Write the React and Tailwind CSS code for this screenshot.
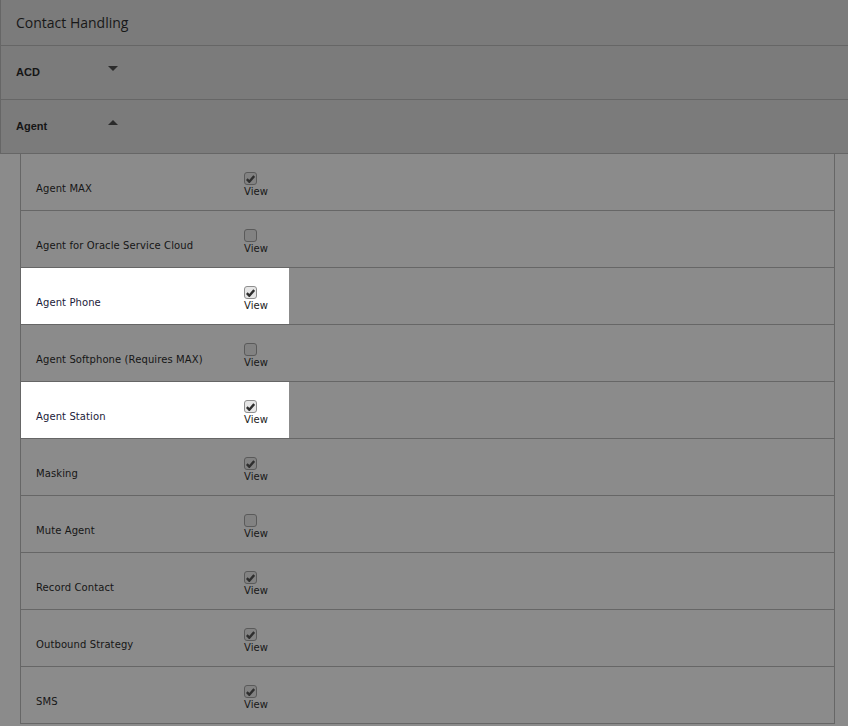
import React from "react";

const rows = [
  { name: "Agent MAX", checked: true },
  { name: "Agent for Oracle Service Cloud", checked: false },
  { name: "Agent Phone", checked: true, lit: true },
  { name: "Agent Softphone (Requires MAX)", checked: false },
  { name: "Agent Station", checked: true, lit: true },
  { name: "Masking", checked: true },
  { name: "Mute Agent", checked: false },
  { name: "Record Contact", checked: true },
  { name: "Outbound Strategy", checked: true },
  { name: "SMS", checked: true },
];

const Check = ({ checked, lit }) => (
  <span
    className={
      "flex h-[13px] w-[13px] items-center justify-center rounded-[3px] border " +
      (lit ? "border-[#8f8f8f] bg-[#e6e6e6]" : "border-[#5a5a5a] bg-[#828282]")
    }
  >
    {checked && (
      <svg width="9" height="8" viewBox="0 0 9 8">
        <path d="M0.8 4.2 L3.3 6.7 L8.2 1" fill="none" stroke="#2e2e2e" strokeWidth="2.4" />
      </svg>
    )}
  </span>
);

const SectionHead = ({ title, open }) => (
  <div className="flex h-[54px] items-center border-b border-[#666] pl-[15px]">
    <span className="w-[92px] text-[11px] font-bold text-[#151515] [font-family:'Liberation_Sans',Arial,sans-serif]">
      {title}
    </span>
    {open ? (
      <span className="mb-[8px] h-0 w-0 border-x-[5px] border-b-[5px] border-x-transparent border-b-[#2b2b2b]" />
    ) : (
      <span className="mb-[8px] h-0 w-0 border-x-[5px] border-t-[5px] border-x-transparent border-t-[#2b2b2b]" />
    )}
  </div>
);

export default function App() {
  return (
    <div className="h-[726px] w-[848px] overflow-hidden bg-[#8b8b8b] [font-family:'DejaVu_Sans',Verdana,sans-serif]">
      {/* section headers */}
      <div className="border-l border-[#666] bg-[#7b7b7b]">
        <div className="flex h-[46px] items-center border-b border-[#666] pl-[15px] pb-[1px] text-[14px] text-[#181818] [font-family:'Open_Sans',sans-serif]">
          Contact Handling
        </div>
        <SectionHead title="ACD" />
        <SectionHead title="Agent" open />
      </div>

      {/* permissions table */}
      <div className="ml-5 w-[815px] border-x border-b border-[#666]">
        {rows.map((r) => (
          <div key={r.name} className="flex h-[57px] border-b border-[#666] last:h-[56px] last:border-b-0">
            <div className={"flex w-[268px] " + (r.lit ? "bg-white" : "")}>
              <div
                className={
                  "flex w-[223px] items-center pl-[15px] pt-[12px] text-[10px] tracking-[0.1px] " +
                  (r.lit ? "text-[#1b1b3a]" : "text-[#161616]")
                }
              >
                {r.name}
              </div>
              <div className="flex flex-col pt-[18px]">
                <Check checked={r.checked} lit={r.lit} />
                <span
                  className={
                    "mt-[1px] text-[10px] leading-[12px] tracking-[0.1px] " +
                    (r.lit ? "text-[#222]" : "text-[#181818]")
                  }
                >
                  View
                </span>
              </div>
            </div>
          </div>
        ))}
      </div>
    </div>
  );
}
